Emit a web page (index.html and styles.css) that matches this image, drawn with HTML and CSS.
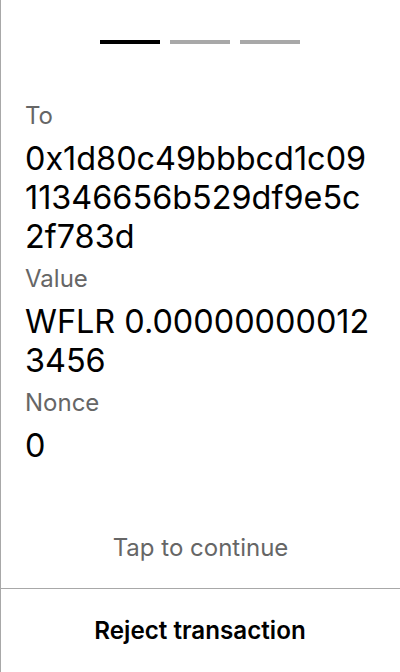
FILE: index.html
```html
<!DOCTYPE html>
<html>
<head>
<meta charset="utf-8">
<link rel="stylesheet" href="styles.css">
</head>
<body>
<div class="screen">
  <div class="progress">
    <span class="seg active"></span>
    <span class="seg"></span>
    <span class="seg"></span>
  </div>
  <div class="fields">
    <div class="label">To</div>
    <div class="value">0x1d80c49bbbcd1c0911346656b529df9e5c2f783d</div>
    <div class="label">Value</div>
    <div class="value">WFLR 0.000000000123456</div>
    <div class="label">Nonce</div>
    <div class="value">0</div>
  </div>
  <div class="tap">Tap to continue</div>
  <div class="footer">Reject transaction</div>
</div>
</body>
</html>
```

FILE: styles.css
```css
* { box-sizing: border-box; }
html, body { margin: 0; padding: 0; background: #fff; }
body { font-family: Inter, "Noto Sans", sans-serif; color: #000; }
.screen {
  width: 400px;
  height: 672px;
  border-left: 1px solid #a8a8a8;
  display: flex;
  flex-direction: column;
}
.progress {
  display: flex;
  justify-content: center;
  gap: 10px;
  padding-top: 40px;
  padding-right: 1px;
}
.seg {
  display: block;
  width: 60px;
  height: 4px;
  background: #a8a8a8;
}
.seg.active { background: #000; }
.fields {
  flex: 1;
  display: flex;
  flex-direction: column;
  gap: 9px;
  padding: 58px 24px 0 24px;
}
.label {
  font-size: 24px;
  line-height: 28px;
  color: #666;
}
.value {
  font-size: 32.4px;
  line-height: 39px;
  word-break: break-all;
}
.tap {
  text-align: center;
  font-size: 24px;
  line-height: 28px;
  color: #666;
  padding-bottom: 26px;
}
.footer {
  height: 84px;
  border-top: 1px solid #a8a8a8;
  display: flex;
  align-items: center;
  justify-content: center;
  font-size: 24.2px;
  font-weight: 600;
  margin-left: -1px;
}
```
